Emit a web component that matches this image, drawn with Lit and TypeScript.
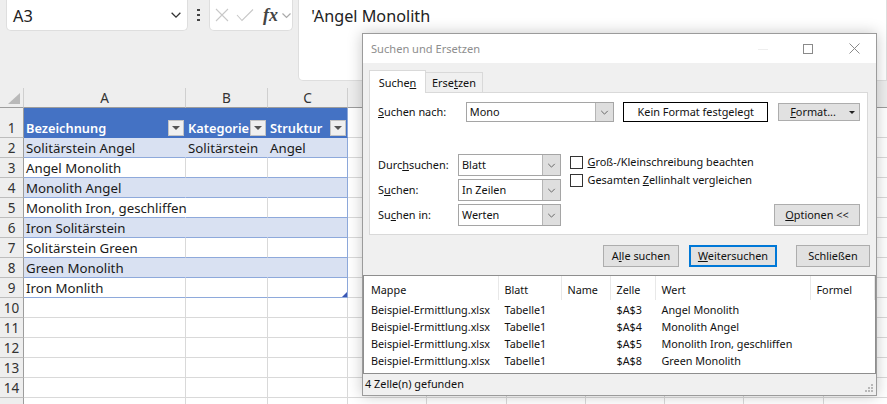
import { LitElement, html, css, svg } from "lit";
import { customElement } from "lit/decorators.js";

const chevron = (size = 11, color = "#555") => html`<svg width=${size} height=${size} viewBox="0 0 11 11"><path d="M1.5 3.5 5.5 7.5 9.5 3.5" fill="none" stroke=${color} stroke-width="1.2"/></svg>`;

const rows: [number, string, string, string, string][] = [
  [2, "Solitärstein Angel", "Solitärstein", "Angel", "band"],
  [3, "Angel Monolith", "", "", "plain"],
  [4, "Monolith Angel", "", "", "band"],
  [5, "Monolith Iron, geschliffen", "", "", "plain over"],
  [6, "Iron Solitärstein", "", "", "band"],
  [7, "Solitärstein Green", "", "", "plain"],
  [8, "Green Monolith", "", "", "band"],
  [9, "Iron Monlith", "", "", "plain last"],
];
const emptyRows = [10, 11, 12, 13, 14, 0];
const extraCols = [0, 1, 2, 3, 4, 5, 6];
const results = [
  ["$A$3", "Angel Monolith"],
  ["$A$4", "Monolith Angel"],
  ["$A$5", "Monolith Iron, geschliffen"],
  ["$A$8", "Green Monolith"],
];

@customElement("app-root")
export class AppRoot extends LitElement {
  static styles = css`
    :host { display: block; position: relative; width: 887px; height: 404px; overflow: hidden; background: #fff; font-family: "Noto Sans", sans-serif; color: #1a1a1a; }
    u { text-underline-offset: 1px; text-decoration-thickness: 1px; }

    .bar { display: flex; height: 88px; background: #eeeeee; box-sizing: border-box; padding-left: 6px; align-items: flex-start; }
    .namebox { width: 182px; height: 31px; box-sizing: border-box; background: #fff; border: 1px solid #dedede; border-top: 0; border-radius: 0 0 5px 5px; display: flex; align-items: center; justify-content: space-between; padding: 0 5px 0 6px; font-size: 16.4px; color: #222; }
    .dots { width: 20px; height: 30px; display: flex; flex-direction: column; align-items: center; justify-content: center; gap: 2.5px; margin-left: 1px; }
    .dots i { width: 2.5px; height: 2.5px; background: #444; display: block; }
    .fxbox { width: 85px; height: 31px; box-sizing: border-box; background: #fff; border: 1px solid #dedede; border-top: 0; border-radius: 0 0 5px 5px; display: flex; align-items: center; padding-left: 5px; }
    .fx { font-family: "Liberation Serif", serif; font-style: italic; font-weight: 700; font-size: 18px; color: #444; margin-left: 9px; margin-right: 2px; width: 16px; text-align: center; }
    .check { margin-left: 7px; }
    .formula { width: 590px; margin-left: 5px; height: 81px; box-sizing: border-box; background: #fff; border: 1px solid #dedede; border-top: 0; border-radius: 0 0 0 5px; padding: 5px 12px; font-size: 16.2px; color: #222; }

    .sheet { display: grid; grid-template-columns: 24px 162px 82px 80px repeat(7, 79.3px); grid-template-rows: 20px 30px repeat(14, 20px); font-size: 13.27px; }
    .c { box-sizing: border-box; border-right: 1px solid #d9d9d9; border-bottom: 1px solid #d9d9d9; white-space: nowrap; display: flex; align-items: flex-end; padding: 0 2px 0 2px; line-height: 18px; min-width: 0; }
    .ch { background: #eeeeee; border-bottom: 1px solid #9d9d9d; border-right: 1px solid #cfcfcf; justify-content: center; align-items: center; padding: 0; font-size: 13.6px; color: #333; }
    .corner { background: #eeeeee; border-right: 1px solid #cfcfcf; border-bottom: 1px solid #9d9d9d; padding: 0; display: block; }
    .rh { background: #eeeeee; border-right: 1px solid #9d9d9d; border-bottom: 1px solid #bdbdbd; justify-content: center; padding: 0; color: #333; font-size: 13.5px; }
    .hd { background: #4472c4; color: #fff; font-weight: 600; font-size: 12.8px; justify-content: space-between; border-color: #4472c4; padding: 0 1px 0 2px; }
    .hd.lastc { border-right: 1px solid #8ea9db; }
    .flt { width: 16px; height: 16px; box-sizing: border-box; background: #f0f0f0; border: 1px solid #c4c4c4; display: flex; align-items: center; justify-content: center; flex: none; margin-bottom: 1px; }
    .flt::after { content: ""; border-left: 4px solid transparent; border-right: 4px solid transparent; border-top: 4px solid #555; }
    .band { background: #d9e1f2; border-bottom-color: #8ea9db; border-right-color: #d9e1f2; }
    .plain { border-bottom-color: #8ea9db; }
    .over { border-right-color: transparent; }
    .rend { border-right-color: #8ea9db; }
    .rend-tri { position: relative; }
    .rend-tri::after { content: ""; position: absolute; right: 0; bottom: 0; border-left: 5px solid transparent; border-bottom: 5px solid #3a57b5; }

    .dlg { position: absolute; left: 362px; top: 33px; width: 515px; height: 363px; box-sizing: border-box; border: 1px solid #9b9b9b; background: #f0f0f0; box-shadow: 0 0 14px rgba(0,0,0,.22); display: flex; flex-direction: column; font-size: 10.9px; color: #111; }
    .tb { height: 29px; background: #fff; display: flex; align-items: center; padding-left: 8px; color: #8e8e8e; font-size: 11.1px; flex: none; }
    .tb span { flex: 1; }
    .tb svg { display: block; }
    .wb { display: flex; align-items: center; margin-right: 16px; }
    .max { margin-left: 35px; }
    .cls { margin-left: 36px; }
    .tabs { display: flex; align-items: flex-end; margin: 7px 0 0 6px; height: 22px; flex: none; position: relative; z-index: 1; }
    .tab { width: 57px; box-sizing: border-box; display: flex; align-items: center; justify-content: center; border: 1px solid #d9d9d9; border-bottom: 0; }
    .tab.on { height: 23px; background: #fff; margin-bottom: -1px; }
    .tab.off { height: 20px; background: #f0f0f0; border-left: 0; }
    .panel { margin: 0 8px 0 6px; height: 143px; box-sizing: border-box; background: #fff; border: 1px solid #d9d9d9; padding: 9px 7px 0 8px; flex: none; }
    .r1 { display: flex; align-items: center; height: 20px; }
    .r1 label { width: 88px; padding-bottom: 2px; box-sizing: border-box; }
    .sel { box-sizing: border-box; border: 1px solid #a5a5a5; background: #fff; display: flex; align-items: center; justify-content: space-between; padding-left: 3px; }
    .sel span { padding-bottom: 2px; }
    .sel b { width: 17px; align-self: stretch; background: #dedede; border-left: 1px solid #b5b5b5; display: flex; align-items: center; justify-content: center; font-weight: 400; }
    .r1 .sel { width: 149px; height: 20px; }
    .kein { width: 145px; height: 20px; box-sizing: border-box; border: 1px solid #000; margin-left: 9px; display: flex; align-items: center; justify-content: center; padding-bottom: 1px; }
    .btn { box-sizing: border-box; background: #e1e1e1; border: 1px solid #adadad; display: flex; align-items: center; justify-content: center; color: #111; padding-bottom: 2px; }
    .fmt { width: 82px; height: 18px; margin-left: 10px; position: relative; padding-right: 12px; }
    .fmt::after { content: ""; position: absolute; right: 4px; top: 7px; border-left: 3px solid transparent; border-right: 3px solid transparent; border-top: 3px solid #222; }
    .r2 { display: flex; margin-top: 32px; }
    .grid { display: grid; grid-template-columns: 80px 103px; grid-auto-rows: 22px; row-gap: 3px; align-items: center; width: 183px; flex: none; }
    .grid label { padding-bottom: 2px; }
    .grid .sel { height: 22px; border-width: 1.5px; }
    .grid .sel b { width: 17px; }
    .opts { flex: 1; display: flex; flex-direction: column; margin-left: 9px; }
    .chk { display: flex; align-items: center; height: 13px; gap: 4.5px; margin: 1.5px 0 4.3px; white-space: nowrap; }
    .chk span { padding-bottom: 2px; }
    .chk i { width: 13px; height: 13px; box-sizing: border-box; border: 1px solid #333; background: #fff; display: block; flex: none; }
    .optbtn { width: 86px; height: 22px; align-self: flex-end; margin-top: auto; }
    .actions { display: flex; justify-content: flex-end; margin-top: 10px; padding-right: 6px; height: 22px; flex: none; }
    .actions .btn { height: 22px; }
    .a1 { width: 76px; margin-right: 10px; }
    .a2 { width: 88px; margin-right: 19px; border: 2px solid #0078d7 !important; }
    .a3 { width: 74px; }
    .list { margin-top: 8px; height: 99px; box-sizing: border-box; border: 1px solid #8e8e8e; background: #fff; display: grid; grid-template-columns: 134.5px 63px 49px 45px 155px 64px; grid-template-rows: 24.5px repeat(4, 17px); align-items: center; flex: none; align-content: start; font-size: 10.8px; }
    .lh { padding-left: 6px; height: 24px; display: flex; align-items: center; border-right: 1px solid #e8e8e8; box-sizing: border-box; align-self: start; padding-top: 2px; }
    .lc { padding-left: 6px; white-space: nowrap; }
    .lh:first-child { padding-left: 7px; }
    .lc.first { padding-left: 7px; }
    .status { flex: 1; display: flex; align-items: center; padding: 0 0 2px 2px; position: relative; background: #f0f0f0; }
    .grip { position: absolute; right: 2px; bottom: 2px; }
  `;

  render() {
    return html`
      <div class="bar">
        <div class="namebox"><span>A3</span>${chevron(12, "#333")}</div>
        <div class="dots"><i></i><i></i><i></i></div>
        <div class="fxbox">
          <svg width="14" height="14" viewBox="0 0 14 14"><path d="M1 1 13 13M13 1 1 13" stroke="#c8c8c8" stroke-width="1.1" fill="none"/></svg>
          <svg class="check" width="18" height="14" viewBox="0 0 18 14"><path d="M1 7 6 12.5 17 1.5" stroke="#c8c8c8" stroke-width="1.1" fill="none"/></svg>
          <span class="fx">fx</span>
          ${chevron(11, "#aaa")}
        </div>
        <div class="formula">'Angel Monolith</div>
      </div>
      <div class="sheet">
        <div class="c corner"><svg width="23" height="19" viewBox="0 0 23 19"><path d="M20 5V16H8Z" fill="#b9b9b9"/></svg></div>
        ${["A", "B", "C", "", "", "", "", "", "", ""].map((l) => html`<div class="c ch">${l}</div>`)}

        <div class="c rh">1</div>
        <div class="c hd"><span>Bezeichnung</span><span class="flt"></span></div>
        <div class="c hd"><span>Kategorie</span><span class="flt"></span></div>
        <div class="c hd lastc"><span>Struktur</span><span class="flt"></span></div>
        ${extraCols.map(() => html`<div class="c"></div>`)}

        ${rows.map(([n, a, b, c, k]) => html`
          <div class="c rh">${n}</div>
          <div class="c ${k}">${a}</div>
          <div class="c ${k.replace(" over", "")}">${b}</div>
          <div class="c ${k.replace(" over", "")} rend ${n === 9 ? "rend-tri" : ""}">${c}</div>
          ${extraCols.map(() => html`<div class="c"></div>`)}
        `)}
        ${emptyRows.map((n) => html`
          <div class="c rh">${n || ""}</div>
          <div class="c"></div><div class="c"></div><div class="c"></div>
          ${extraCols.map(() => html`<div class="c"></div>`)}
        `)}
      </div>

      <div class="dlg">
        <div class="tb">
          <span>Suchen und Ersetzen</span>
          <div class="wb">
            <svg width="10" height="10" viewBox="0 0 10 10"><path d="M0 5.5H10" stroke="#eeeeee"/></svg>
            <svg class="max" width="10" height="10" viewBox="0 0 10 10"><rect x=".5" y=".5" width="9" height="9" fill="none" stroke="#8a8a8a"/></svg>
            <svg class="cls" width="11" height="11" viewBox="0 0 11 11"><path d="M.5.5 10.5 10.5M10.5.5.5 10.5" stroke="#8a8a8a" fill="none"/></svg>
          </div>
        </div>
        <div class="tabs">
          <div class="tab on"><span>Suche<u>n</u></span></div>
          <div class="tab off"><span>Erse<u>t</u>zen</span></div>
        </div>
        <div class="panel">
          <div class="r1">
            <label><u>S</u>uchen nach:</label>
            <div class="sel"><span>Mono</span><b>${chevron(9, "#666")}</b></div>
            <div class="kein">Kein Format festgelegt</div>
            <div class="btn fmt"><span><u>F</u>ormat...</span></div>
          </div>
          <div class="r2">
            <div class="grid">
              <label>Durc<u>h</u>suchen:</label>
              <div class="sel"><span>Blatt</span><b>${chevron(9, "#666")}</b></div>
              <label>S<u>u</u>chen:</label>
              <div class="sel"><span>In Zeilen</span><b>${chevron(9, "#666")}</b></div>
              <label>Su<u>c</u>hen in:</label>
              <div class="sel"><span>Werten</span><b>${chevron(9, "#666")}</b></div>
            </div>
            <div class="opts">
              <div class="chk"><i></i><span><u>G</u>roß-/Kleinschreibung beachten</span></div>
              <div class="chk"><i></i><span>Gesamten <u>Z</u>ellinhalt vergleichen</span></div>
              <div class="btn optbtn"><span><u>O</u>ptionen &lt;&lt;</span></div>
            </div>
          </div>
        </div>
        <div class="actions">
          <div class="btn a1"><span>A<u>l</u>le suchen</span></div>
          <div class="btn a2"><span><u>W</u>eitersuchen</span></div>
          <div class="btn a3"><span>Schließen</span></div>
        </div>
        <div class="list">
          ${["Mappe", "Blatt", "Name", "Zelle", "Wert", "Formel"].map((h) => html`<div class="lh">${h}</div>`)}
          ${results.map(([z, w]) => html`
            <div class="lc first">Beispiel-Ermittlung.xlsx</div>
            <div class="lc">Tabelle1</div>
            <div class="lc"></div>
            <div class="lc">${z}</div>
            <div class="lc">${w}</div>
            <div class="lc"></div>
          `)}
        </div>
        <div class="status">4 Zelle(n) gefunden
          <svg class="grip" width="10" height="10" viewBox="0 0 10 10" fill="#b8b8b8">
            ${[[7, 1], [4, 4], [7, 4], [1, 7], [4, 7], [7, 7]].map(([x, y]) => svg`<rect x=${x} y=${y} width="2" height="2"/>`)}
          </svg>
        </div>
      </div>
    `;
  }
}
